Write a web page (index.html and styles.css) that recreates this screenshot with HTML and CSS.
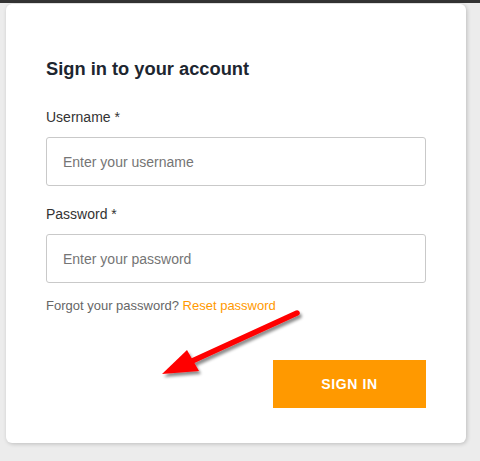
FILE: index.html
```html
<!DOCTYPE html>
<html lang="en">
<head>
<meta charset="utf-8">
<title>Sign in</title>
<link rel="stylesheet" href="styles.css">
</head>
<body>
<div class="topbar"></div>
<div class="card">
  <h1 class="title">Sign in to your account</h1>
  <div class="field">
    <label class="label" for="u">Username *</label>
    <input class="input" id="u" type="text" placeholder="Enter your username">
  </div>
  <div class="field">
    <label class="label" for="p">Password *</label>
    <input class="input" id="p" type="password" placeholder="Enter your password">
  </div>
  <p class="forgot">Forgot your password? <a class="link" href="#">Reset password</a></p>
  <div class="actions">
    <button class="btn" type="button">SIGN IN</button>
  </div>
  <svg class="arrow" width="160" height="90" viewBox="0 0 160 90">
    <defs>
      <filter id="sh" x="-20%" y="-20%" width="140%" height="150%">
        <feDropShadow dx="2" dy="3" stdDeviation="1.6" flood-color="#000" flood-opacity="0.45"/>
      </filter>
    </defs>
    <g filter="url(#sh)">
      <line x1="147" y1="13" x2="40" y2="62" stroke="#ff0000" stroke-width="5.5" stroke-linecap="round"/>
      <polygon points="12,74 37,50 49,71" fill="#ff0000"/>
    </g>
  </svg>
</div>
</body>
</html>
```

FILE: styles.css
```css
html, body {
  margin: 0;
  padding: 0;
}
body {
  background: #ececec;
  font-family: "Liberation Sans", Arial, sans-serif;
  width: 480px;
  height: 461px;
  overflow: hidden;
}
.topbar {
  height: 3px;
  background: #333333;
}
.card {
  position: relative;
  box-sizing: border-box;
  width: 460px;
  margin: 1px 0 0 6px;
  padding: 53px 40px 35px;
  background: #ffffff;
  border-radius: 6px;
  box-shadow: 1px 1px 4px rgba(0, 0, 0, 0.2);
}
.title {
  margin: 0 0 26px;
  font-size: 18.3px;
  line-height: 24px;
  font-weight: bold;
  color: #1d2630;
}
.field {
  display: flex;
  flex-direction: column;
  margin-bottom: 18px;
}
.field + .field {
  margin-bottom: 14px;
}
.label {
  font-size: 14px;
  line-height: 20px;
  color: #333333;
  margin-bottom: 10px;
}
.input {
  box-sizing: border-box;
  height: 49px;
  width: 100%;
  border: 1px solid #c9c9c9;
  border-radius: 3px;
  padding: 0 16px;
  font-family: "Liberation Sans", Arial, sans-serif;
  font-size: 14px;
  color: #333;
  background: #fff;
  outline: none;
}
.input::placeholder {
  color: #757575;
}
.forgot {
  margin: 0;
  font-size: 13px;
  line-height: 18px;
  color: #666666;
}
.link {
  color: #ff9900;
  text-decoration: none;
}
.actions {
  display: flex;
  justify-content: flex-end;
  margin-top: 45px;
}
.btn {
  width: 153px;
  height: 48px;
  border: none;
  border-radius: 0;
  background: #ff9900;
  color: #ffffff;
  font-family: "Liberation Sans", Arial, sans-serif;
  font-size: 14px;
  font-weight: bold;
  letter-spacing: 0.6px;
  cursor: pointer;
}
.arrow {
  position: absolute;
  left: 144px;
  top: 296px;
}
```
